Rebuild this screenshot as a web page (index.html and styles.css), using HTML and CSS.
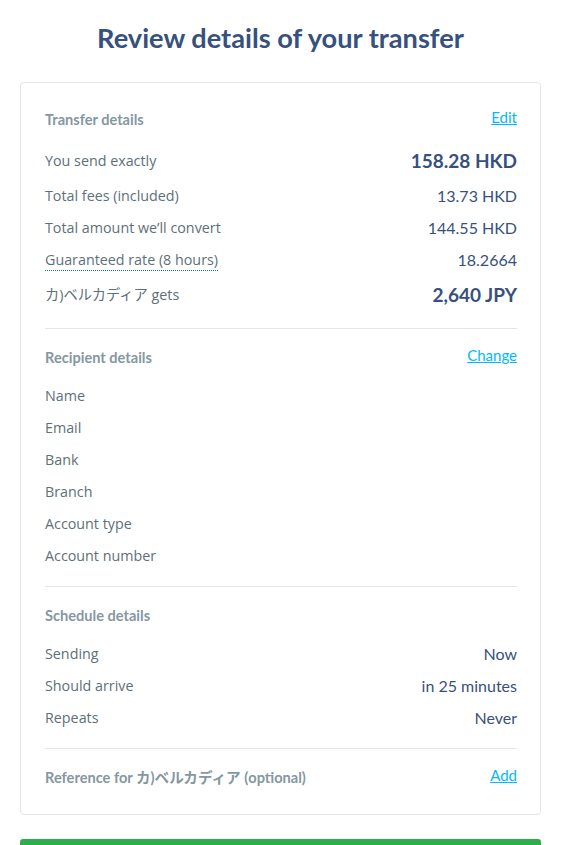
FILE: index.html
```html
<!DOCTYPE html>
<html lang="en">
<head>
<meta charset="utf-8">
<title>Review details of your transfer</title>
<link rel="stylesheet" href="styles.css">
</head>
<body>
<main class="page">
  <h1 class="title">Review details of your transfer</h1>
  <section class="card">
    <div class="section">
      <div class="section-head">
        <h2 class="section-title">Transfer details</h2>
        <a class="link" href="#">Edit</a>
      </div>
      <div class="row row-big"><span class="label">You send exactly</span><span class="value value-big">158.28 HKD</span></div>
      <div class="row"><span class="label">Total fees (included)</span><span class="value">13.73 HKD</span></div>
      <div class="row"><span class="label">Total amount we’ll convert</span><span class="value">144.55 HKD</span></div>
      <div class="row"><span class="label label-dotted">Guaranteed rate (8 hours)</span><span class="value">18.2664</span></div>
      <div class="row row-big"><span class="label">カ)ベルカディア gets</span><span class="value value-big">2,640 JPY</span></div>
    </div>
    <div class="section">
      <div class="section-head">
        <h2 class="section-title">Recipient details</h2>
        <a class="link" href="#">Change</a>
      </div>
      <div class="row"><span class="label">Name</span><span class="value"></span></div>
      <div class="row"><span class="label">Email</span><span class="value"></span></div>
      <div class="row"><span class="label">Bank</span><span class="value"></span></div>
      <div class="row"><span class="label">Branch</span><span class="value"></span></div>
      <div class="row"><span class="label">Account type</span><span class="value"></span></div>
      <div class="row"><span class="label">Account number</span><span class="value"></span></div>
    </div>
    <div class="section">
      <div class="section-head">
        <h2 class="section-title">Schedule details</h2>
      </div>
      <div class="row"><span class="label">Sending</span><span class="value">Now</span></div>
      <div class="row"><span class="label">Should arrive</span><span class="value">in 25 minutes</span></div>
      <div class="row"><span class="label">Repeats</span><span class="value">Never</span></div>
    </div>
    <div class="section section-last">
      <div class="section-head section-head-only">
        <h2 class="section-title">Reference for カ)ベルカディア (optional)</h2>
        <a class="link" href="#">Add</a>
      </div>
    </div>
  </section>
  <button class="confirm" type="button" aria-label="Confirm and continue"></button>
</main>
</body>
</html>
```

FILE: styles.css
```css
* { box-sizing: border-box; }

html, body {
  margin: 0;
  padding: 0;
  background: #ffffff;
}

body {
  font-family: "Open Sans", "Noto Sans CJK JP", sans-serif;
  color: #5d7079;
}

.page {
  margin: 0 24px 0 20px;
  padding-top: 18px;
}

.title {
  margin: 0 0 24px;
  font-family: Lato, "Noto Sans CJK JP", sans-serif;
  font-weight: 700;
  font-size: 27.2px;
  line-height: 40px;
  color: #37517e;
  text-align: center;
}

.card {
  border: 1px solid #e2e6e8;
  border-radius: 4px;
  padding: 8px 23px 12px 24px;
}

.section {
  padding: 17px 0 14px;
  border-bottom: 1px solid #e2e6e8;
}

.section-last {
  border-bottom: none;
}

.section-head {
  display: flex;
  justify-content: space-between;
  align-items: flex-start;
  margin-bottom: 12px;
  height: 22px;
}

.section-head-only {
  margin-bottom: 0;
}

.section-title {
  margin: 0;
  font-family: Lato, "Noto Sans CJK JP", sans-serif;
  font-size: 14.6px;
  font-weight: 700;
  line-height: 22px;
  color: #8597a1;
  padding-top: 1px;
}

.link {
  font-family: Lato, sans-serif;
  font-size: 15px;
  line-height: 18px;
  color: #00b9ff;
  text-decoration: underline;
}

.row {
  display: flex;
  justify-content: space-between;
  align-items: center;
  padding: 4px 0;
  line-height: 24px;
}

.row-big {
  line-height: 30px;
}

.label {
  font-size: 14.3px;
  color: #5d7079;
  line-height: 24px;
}

.label-dotted {
  border-bottom: 1px dotted #0e7c86;
  line-height: 20px;
}

.value {
  font-family: Lato, "Noto Sans CJK JP", sans-serif;
  font-size: 16px;
  color: #37517e;
}

.value-big {
  font-size: 19px;
  font-weight: 700;
}

.confirm {
  display: block;
  width: 100%;
  margin-top: 24px;
  height: 48px;
  border: none;
  border-radius: 3px;
  background: #2ead4b;
}
```
